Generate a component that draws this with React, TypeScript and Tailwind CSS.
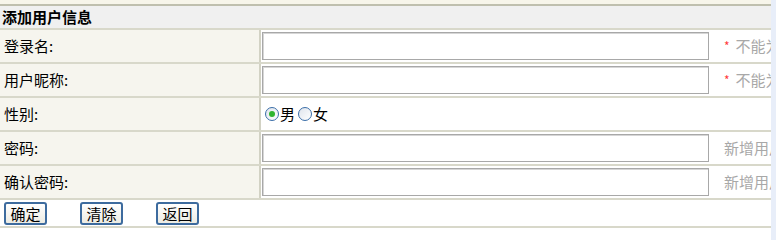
import React from 'react';

const font = { fontFamily: '"Noto Sans CJK SC", "DejaVu Sans", sans-serif' };

function Radio({ checked }: { checked?: boolean }) {
  return (
    <span className="w-[14px] h-[14px] rounded-full border border-[#3a6ea8] bg-gradient-to-br from-[#dfe4ec] to-white flex items-center justify-center">
      {checked && <span className="w-[6px] h-[6px] rounded-full bg-[#2fb52f]" />}
    </span>
  );
}

function Row({ label, hint, required, children }: { label: string; hint?: string; required?: boolean; children?: React.ReactNode }) {
  return (
    <div className="flex h-[34px] border-b-2 border-[#d8d8ca]">
      <div className="w-[261px] bg-[#f6f5ee] border-r-2 border-[#d2d2c4] flex items-center pl-[4px] text-[15px] text-black">
        {label}:
      </div>
      <div className="flex-1 bg-white flex items-center pl-[1px] overflow-hidden whitespace-nowrap">
        {children ?? (
          <>
            <div className="w-[447px] h-[28px] border border-[#a8a8a8] shadow-[inset_1px_1px_0_#d6d6d6] bg-white shrink-0" />
            <span className="ml-[15px] text-[15px] text-[#a8a8a8] flex items-center">
              {required && <span className="text-[#ff3a3a] text-[12px] mr-[6px]">*</span>}
              {hint}
            </span>
          </>
        )}
      </div>
    </div>
  );
}

function Btn({ children }: { children: React.ReactNode }) {
  return (
    <button className="h-[23px] w-[43px] rounded-[3px] border-2 border-[#3d6b9e] bg-gradient-to-b from-white to-[#ecebe3] text-[15px] leading-none text-black flex items-center justify-center">
      {children}
    </button>
  );
}

export default function App() {
  return (
    <div className="w-[776px] h-[240px] bg-[#e8eef9] flex" style={font}>
      <div className="w-[771px] bg-white flex flex-col">
        <div className="h-[4px] bg-[#f7f5ea]" />
        <div className="h-[2px] bg-[#bfbfae]" />
        <div className="h-[24px] bg-[#f0f0f0] border-b-2 border-[#d8d8ca] flex items-center pl-[2px] text-[15px] font-bold text-black">
          添加用户信息
        </div>
        <Row label="登录名" required hint="不能为空" />
        <Row label="用户昵称" required hint="不能为空" />
        <Row label="性别">
          <div className="flex items-center pl-[3px] text-[15px] text-black">
            <Radio checked />
            <span className="ml-[1px]">男</span>
            <span className="ml-[3px]"><Radio /></span>
            <span className="ml-[1px]">女</span>
          </div>
        </Row>
        <Row label="密码" hint="新增用户默认密码" />
        <Row label="确认密码" hint="新增用户默认密码" />
        <div className="h-[28px] border-b-2 border-[#d8d8ca] flex items-center pl-[4px] gap-[33px]">
          <Btn>确定</Btn>
          <Btn>清除</Btn>
          <Btn>返回</Btn>
        </div>
      </div>
    </div>
  );
}
